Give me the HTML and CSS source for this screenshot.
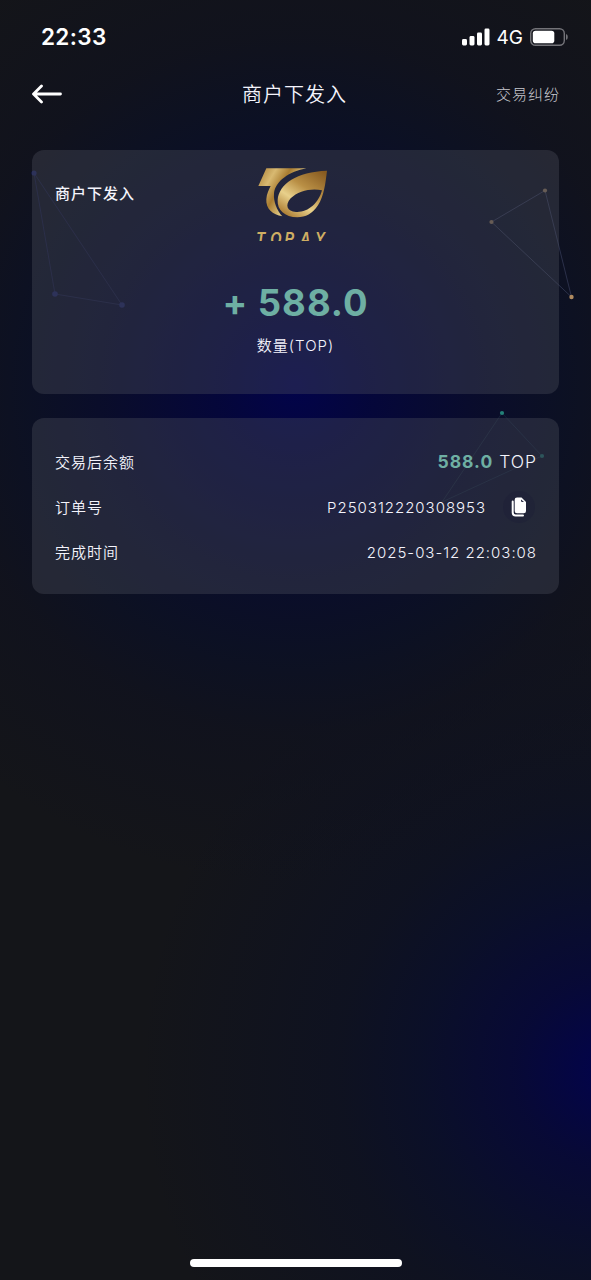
FILE: index.html
```html
<!DOCTYPE html>
<html lang="zh-CN">
<head>
<meta charset="utf-8">
<meta name="viewport" content="width=device-width, initial-scale=1">
<title>商户下发入</title>
<link rel="stylesheet" href="styles.css">
</head>
<body>
<div class="screen">
  <svg class="constellation" viewBox="0 0 591 1280" aria-hidden="true">
    <g class="blue"><path d="M34 173 55 294 122 305Z"/><circle cx="34" cy="173" r="2.6"/><circle cx="55" cy="294" r="2.8"/><circle cx="122" cy="305" r="2.8"/></g>
    <g class="gold"><path d="M491.500 222 545 190.500 571.500 297Z"/><circle cx="491.500" cy="222" r="2.100"/><circle cx="545" cy="190.500" r="2.100"/><circle class="bright" cx="571.500" cy="297" r="2.200"/></g>
    <g class="green"><path d="M502 413 542 456 442 502Z"/><circle cx="502" cy="413" r="2.100"/><circle class="dim" cx="542" cy="456" r="2.100"/></g>
  </svg>

  <header class="status">
    <span class="clock">22:33</span>
    <div class="indicators">
      <svg class="signal" viewBox="0 0 28 18"><rect x="0" y="11" width="5" height="6.500" rx="1.400"/><rect x="7.500" y="8" width="5" height="9.500" rx="1.400"/><rect x="15" y="4.500" width="5" height="13" rx="1.400"/><rect x="22.500" y="0.500" width="5" height="17" rx="1.400"/></svg>
      <span class="network">4G</span>
      <svg class="battery" viewBox="0 0 38 18"><rect class="shell" x="0.700" y="0.700" width="33.600" height="16.600" rx="4.800"/><path class="tip" d="M36 6v6q1.800-.7 1.800-3T36 6Z"/><rect x="2.800" y="2.800" width="21.500" height="12.400" rx="2.800"/></svg>
    </div>
  </header>

  <nav class="navbar">
    <svg class="back" viewBox="0 0 30 20"><path d="M9.500 2 1.500 10 9.500 18M2 10H28.500"/></svg>
    <h1 class="title">商户下发入</h1>
    <a class="dispute">交易纠纷</a>
  </nav>

  <main class="cards">
    <section class="card summary">
      <h2 class="kind">商户下发入</h2>
      <svg class="logo" viewBox="0 0 360 273">
        <defs>
          <linearGradient id="gold" x1="0" y1="0" x2="1" y2="0.600"><stop offset="0" stop-color="#a87c34"/><stop offset=".28" stop-color="#d8b971"/><stop offset=".5" stop-color="#a97c30"/><stop offset=".75" stop-color="#dfc681"/><stop offset="1" stop-color="#956923"/></linearGradient>
          <linearGradient id="ring" x1="0.900" y1="0" x2="0.200" y2="1"><stop offset="0" stop-color="#875a20"/><stop offset=".4" stop-color="#b98f45"/><stop offset=".68" stop-color="#e8d08b"/><stop offset="1" stop-color="#a9792f"/></linearGradient>
        </defs>
        <path fill="url(#gold)" d="M94 55H214C163 64 121 94 117 130C115 155 125 181 142 199C113 195 92 176 94 148C95 132 101 120 107 108H70Z"/>
        <path fill="url(#ring)" fill-rule="evenodd" d="M276 62C271 103 267 137 249 166C232 192 212 202 187 202C149 201 126 180 128 150C132 101 185 66 276 62ZM261 121C232 113 189 122 167 145C149 166 156 184 183 186C219 188 251 159 261 121Z"/>
        <text class="brand" transform="scale(.8 1)" x="80 132 186 244 301" y="286">TOPAY</text>
      </svg>
      <strong class="amount">+ 588.0</strong>
      <span class="unit">数量(TOP)</span>
    </section>

    <section class="card details">
      <div class="row"><span class="label">交易后余额</span><span class="balance"><b>588.0</b> TOP</span></div>
      <div class="row"><span class="label">订单号</span><span class="order"><span class="number">P250312220308953</span><i class="copy"><svg viewBox="0 0 16 20"><path class="sheet" d="M1.700 4.500V15.500Q1.700 18.500 4.600 18.500H12"/><path d="M6 0.500H10.500L15 5V14Q15 16.300 12.700 16.300H6Q3.700 16.300 3.700 14V2.800Q3.700 .5 6 .5Z"/><path class="fold" d="M10 2.600V3.700Q10 5 11.300 5H13Z"/></svg></i></span></div>
      <div class="row"><span class="label">完成时间</span><span class="time">2025-03-12 22:03:08</span></div>
    </section>
  </main>
  <div class="home-bar"></div>
</div>
</body>
</html>
```
FILE: styles.css
```css
* { box-sizing: border-box; }
body { margin: 0; }
.screen {
  position: relative;
  display: flex;
  flex-direction: column;
  width: 591px;
  height: 1280px;
  overflow: hidden;
  color: #f4f4fc;
  font-family: Inter, "Noto Sans CJK SC", sans-serif;
  font-size: 15px;
  letter-spacing: 1px;
  background:
    radial-gradient(circle at 295px 385px, #02034a 0, rgba(4, 6, 60, .96) 75px, rgba(9, 12, 44, .93) 190px, rgba(11, 16, 37, .88) 270px, rgba(15, 17, 31, .65) 350px, rgba(20, 21, 25, 0) 500px),
    radial-gradient(circle at 610px 1070px, #02034c 0, rgba(7, 9, 55, .95) 95px, rgba(10, 15, 42, .9) 190px, rgba(13, 17, 35, .75) 270px, rgba(20, 21, 25, 0) 470px),
    #141519;
}
.constellation { position: absolute; inset: 0; width: 591px; height: 1280px; pointer-events: none; }
.constellation path { fill: none; stroke-width: 1; }
.blue { fill: #1a2056; stroke: none; }
.blue path { stroke: #181c3e; }
.gold { fill: #72604f; }
.gold path { stroke: #2b304a; }
.gold .bright { fill: #b08b60; }
.green { fill: #238078; }
.green path { stroke: #152038; }
.green .dim { fill: #1b5558; }

.status { position: relative; display: flex; justify-content: space-between; align-items: center; height: 73px; padding: 0 23px 0 41px; }
.clock { font-size: 22.500px; font-weight: 600; letter-spacing: .35px; color: #fff; }
.indicators { display: flex; align-items: center; gap: 7px; }
.indicators svg { fill: #fff; }
.signal { width: 28px; height: 18px; }
.network { padding-top: 1px; font-size: 19px; letter-spacing: 0; color: #fff; }
.battery { width: 38px; height: 18px; }
.battery .shell { fill: none; stroke: #737378; stroke-width: 1.400; }
.battery .tip { fill: #737378; }

.navbar { position: relative; display: grid; grid-template-columns: 1fr auto 1fr; align-items: center; height: 42px; padding: 0 32px 0 32px; }
.back { width: 30px; height: 20px; fill: none; stroke: #fff; stroke-width: 2.800; stroke-linecap: round; stroke-linejoin: round; }
.title { margin: 0 2px 1px 0; font-size: 20px; font-weight: 350; }
.dispute { justify-self: end; margin-right: -1px; padding-bottom: 1px; font-weight: 300; color: #c9cad1; }

.cards { position: relative; display: flex; flex-direction: column; gap: 24px; padding: 35px 32px 0; }
.card { border-radius: 12px; background: rgba(82, 85, 98, .34); }
.summary { display: grid; grid-template-columns: 1fr 120px 1fr; grid-template-rows: 91px 1fr auto; height: 244px; padding: 0 24px 36px; justify-items: center; }
.kind { justify-self: start; margin: 33px 0 0 -1px; font-size: 15px; line-height: 22px; font-weight: 500; white-space: nowrap; }
.logo { width: 120px; height: 91px; margin-left: -1px; }
.brand { font: italic 700 54px "Liberation Sans", sans-serif; letter-spacing: 0; fill: #cfae63; }
.amount { grid-column: 1 / -1; align-self: end; margin-bottom: 9px; font-size: 36.500px; font-weight: 650; line-height: 44px; color: #6eafa3; }
.unit { grid-column: 1 / -1; line-height: 24px; font-weight: 350; }

.details { display: flex; flex-direction: column; height: 176px; padding: 21px 22px 0 23px; }
.row { display: flex; justify-content: space-between; align-items: center; height: 45px; font-weight: 350; }
.number, .time { padding-top: 2px; letter-spacing: .98px; }
.order { display: flex; align-items: center; }
.balance { font-size: 17.500px; font-weight: 300; }
.balance b { font-weight: 650; color: #6eafa3; }
.copy { display: flex; align-items: center; justify-content: center; width: 32px; height: 32px; margin: 0 2px 0 17px; border-radius: 50%; background: rgba(29, 30, 56, .45); }
.copy svg { width: 16px; height: 20px; fill: #fff; }
.copy .sheet { fill: none; stroke: #fff; stroke-width: 2; stroke-linecap: round; }
.copy .fold { fill: #25263f; }
.home-bar { width: 212px; height: 8px; margin: auto auto 13px 190px; border-radius: 4px; background: #fff; }
```
